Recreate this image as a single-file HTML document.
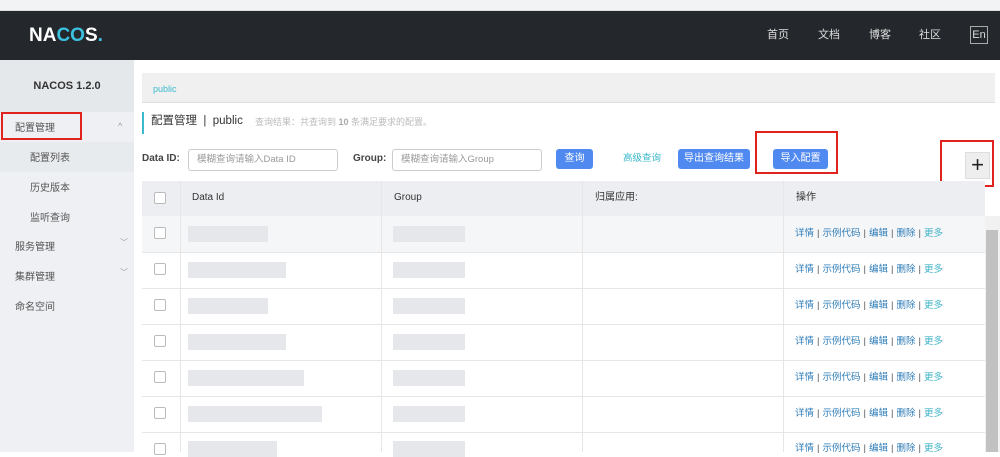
<!DOCTYPE html><html><head><meta charset="utf-8"><style>
*{margin:0;padding:0;box-sizing:border-box}
body{width:1000px;height:452px;overflow:hidden;background:#fff;font-family:"Liberation Sans","Noto Sans CJK SC",sans-serif;font-size:10px;color:#333;position:relative;line-height:1.2}
.a{position:absolute}
.hd{left:0;top:0;width:1000px;height:11px;background:#f1f3f4;border-bottom:1px solid #ddd}
.top{left:0;top:11px;width:1000px;height:49px;background:#24282c}
.nav{color:#ddd;font-size:11px;top:29px}
.side{left:0;top:60px;width:134px;height:392px;background:#eef0f3}
.ver{left:0;top:60px;width:134px;height:52px;background:#e5e8eb;text-align:center;line-height:52px;font-weight:bold;font-size:11px;color:#333}
.mi{font-size:10px;color:#555}
.red{border:2px solid #e0231c}
.btn{background:#5089f0;color:#fff;border-radius:3px;text-align:center;line-height:20px;font-size:10px;height:20px}
.inp{border:1px solid #ccc;border-radius:3px;height:22px;color:#999;font-size:9.5px;line-height:20px;padding-left:8px;background:#fff}
.blk{background:#e6e7ea;height:16px}
.ops{color:#2f7db8;font-size:9.5px;left:795px}
.ops span{color:#555;margin:0 3px}
.ops b{font-weight:normal;color:#41b3c8}
.cb{width:12px;height:12px;border:1px solid #bbb;border-radius:2px;background:#fff;left:154px}
</style></head><body>
<div class="a hd"></div>
<div class="a top"></div>
<div class="a" style="left:29px;top:25px;color:#fff;font-size:19px;font-weight:bold">NA<span style="color:#3cc0e0">CO</span>S<span style="color:#3cc0e0">.</span></div>
<div class="a nav" style="left:767px">首页</div>
<div class="a nav" style="left:818px">文档</div>
<div class="a nav" style="left:869px">博客</div>
<div class="a nav" style="left:919px">社区</div>
<div class="a" style="left:970px;top:26px;width:18px;height:18px;border:1px solid #aaa;color:#ddd;font-size:11px;text-align:center;line-height:16px">En</div>
<div class="a side"></div>
<div class="a ver">NACOS 1.2.0</div>
<div class="a mi" style="left:15px;top:123px">配置管理</div>
<div class="a" style="left:118px;top:121px;color:#999;font-size:9px">^</div>
<div class="a red" style="left:1px;top:112px;width:81px;height:28px"></div>
<div class="a" style="left:0;top:142px;width:134px;height:30px;background:#e8ebee"></div>
<div class="a mi" style="left:30px;top:153px">配置列表</div>
<div class="a mi" style="left:30px;top:183px">历史版本</div>
<div class="a mi" style="left:30px;top:213px">监听查询</div>
<div class="a mi" style="left:15px;top:242px">服务管理</div>
<div class="a mi" style="left:15px;top:272px">集群管理</div>
<div class="a mi" style="left:15px;top:302px">命名空间</div>
<div class="a" style="left:120px;top:238px;color:#999;font-size:8px">﹀</div>
<div class="a" style="left:120px;top:268px;color:#999;font-size:8px">﹀</div>
<div class="a" style="left:142px;top:73px;width:853px;height:30px;background:#f0f0f0;border-bottom:1px solid #ddd"></div>
<div class="a" style="left:153px;top:84px;color:#3bb8cc;font-size:9px">public</div>
<div class="a" style="left:142px;top:112px;width:2px;height:22px;background:#3bb8cc"></div>
<div class="a" style="left:151px;top:115px;font-size:11.5px;color:#333">配置管理 &nbsp;|&nbsp; public</div>
<div class="a" style="left:255px;top:117px;font-size:9px;color:#bbb">查询结果：共查询到 <b style="color:#aaa">10</b> 条满足要求的配置。</div>
<div class="a" style="left:142px;top:153px;font-weight:bold;font-size:10px;color:#444">Data ID:</div>
<div class="a inp" style="left:188px;top:149px;width:150px">模糊查询请输入Data ID</div>
<div class="a" style="left:353px;top:153px;font-weight:bold;font-size:10px;color:#444">Group:</div>
<div class="a inp" style="left:392px;top:149px;width:150px">模糊查询请输入Group</div>
<div class="a btn" style="left:556px;top:149px;width:37px">查询</div>
<div class="a" style="left:623px;top:153px;color:#3bb8cc;font-size:9.5px">高级查询</div>
<div class="a btn" style="left:678px;top:149px;width:72px">导出查询结果</div>
<div class="a btn" style="left:773px;top:149px;width:55px">导入配置</div>
<div class="a red" style="left:755px;top:131px;width:83px;height:43px"></div>
<div class="a" style="left:965px;top:152px;width:25px;height:27px;background:#eee;border:1px solid #ddd;font-size:22px;line-height:23px;text-align:center;color:#222">+</div>
<div class="a red" style="left:940px;top:140px;width:54px;height:47px"></div>
<div class="a" style="left:142px;top:181px;width:843px;height:35px;background:#eceef1"></div>
<div class="a" style="left:142px;top:216px;width:843px;height:36px;background:#f5f6f8"></div>
<div class="a" style="left:985px;top:216px;width:15px;height:236px;background:#f1f1f1"></div>
<div class="a" style="left:986px;top:230px;width:12px;height:222px;background:#c1c1c1"></div>
<div class="a" style="left:192px;top:192px;font-size:10px">Data Id</div>
<div class="a" style="left:394px;top:192px;font-size:10px">Group</div>
<div class="a" style="left:595px;top:192px;font-size:10px">归属应用:</div>
<div class="a" style="left:796px;top:192px;font-size:10px">操作</div>
<div class="a cb" style="top:192px"></div>
<div class="a" style="left:180px;top:181px;width:1px;height:271px;background:#e6e6e6"></div>
<div class="a" style="left:381px;top:181px;width:1px;height:271px;background:#e6e6e6"></div>
<div class="a" style="left:582px;top:181px;width:1px;height:271px;background:#e6e6e6"></div>
<div class="a" style="left:783px;top:181px;width:1px;height:271px;background:#e6e6e6"></div>

<div class="a" style="left:142px;top:252px;width:843px;height:1px;background:#e6e6e6"></div>
<div class="a" style="left:142px;top:288px;width:843px;height:1px;background:#e6e6e6"></div>
<div class="a" style="left:142px;top:324px;width:843px;height:1px;background:#e6e6e6"></div>
<div class="a" style="left:142px;top:360px;width:843px;height:1px;background:#e6e6e6"></div>
<div class="a" style="left:142px;top:396px;width:843px;height:1px;background:#e6e6e6"></div>
<div class="a" style="left:142px;top:432px;width:843px;height:1px;background:#e6e6e6"></div>

<div class="a cb" style="top:227px"></div><div class="a blk" style="left:188px;top:226px;width:80px"></div><div class="a blk" style="left:393px;top:226px;width:72px"></div><div class="a ops" style="top:228px">详情<span>|</span>示例代码<span>|</span>编辑<span>|</span>删除<span>|</span><b>更多</b></div>
<div class="a cb" style="top:263px"></div><div class="a blk" style="left:188px;top:262px;width:98px"></div><div class="a blk" style="left:393px;top:262px;width:72px"></div><div class="a ops" style="top:264px">详情<span>|</span>示例代码<span>|</span>编辑<span>|</span>删除<span>|</span><b>更多</b></div>
<div class="a cb" style="top:299px"></div><div class="a blk" style="left:188px;top:298px;width:80px"></div><div class="a blk" style="left:393px;top:298px;width:72px"></div><div class="a ops" style="top:300px">详情<span>|</span>示例代码<span>|</span>编辑<span>|</span>删除<span>|</span><b>更多</b></div>
<div class="a cb" style="top:335px"></div><div class="a blk" style="left:188px;top:334px;width:98px"></div><div class="a blk" style="left:393px;top:334px;width:72px"></div><div class="a ops" style="top:336px">详情<span>|</span>示例代码<span>|</span>编辑<span>|</span>删除<span>|</span><b>更多</b></div>
<div class="a cb" style="top:371px"></div><div class="a blk" style="left:188px;top:370px;width:116px"></div><div class="a blk" style="left:393px;top:370px;width:72px"></div><div class="a ops" style="top:372px">详情<span>|</span>示例代码<span>|</span>编辑<span>|</span>删除<span>|</span><b>更多</b></div>
<div class="a cb" style="top:407px"></div><div class="a blk" style="left:188px;top:406px;width:134px"></div><div class="a blk" style="left:393px;top:406px;width:72px"></div><div class="a ops" style="top:408px">详情<span>|</span>示例代码<span>|</span>编辑<span>|</span>删除<span>|</span><b>更多</b></div>
<div class="a cb" style="top:443px"></div><div class="a blk" style="left:188px;top:441px;width:89px"></div><div class="a blk" style="left:393px;top:441px;width:72px"></div><div class="a ops" style="top:443px">详情<span>|</span>示例代码<span>|</span>编辑<span>|</span>删除<span>|</span><b>更多</b></div>
</body></html>
